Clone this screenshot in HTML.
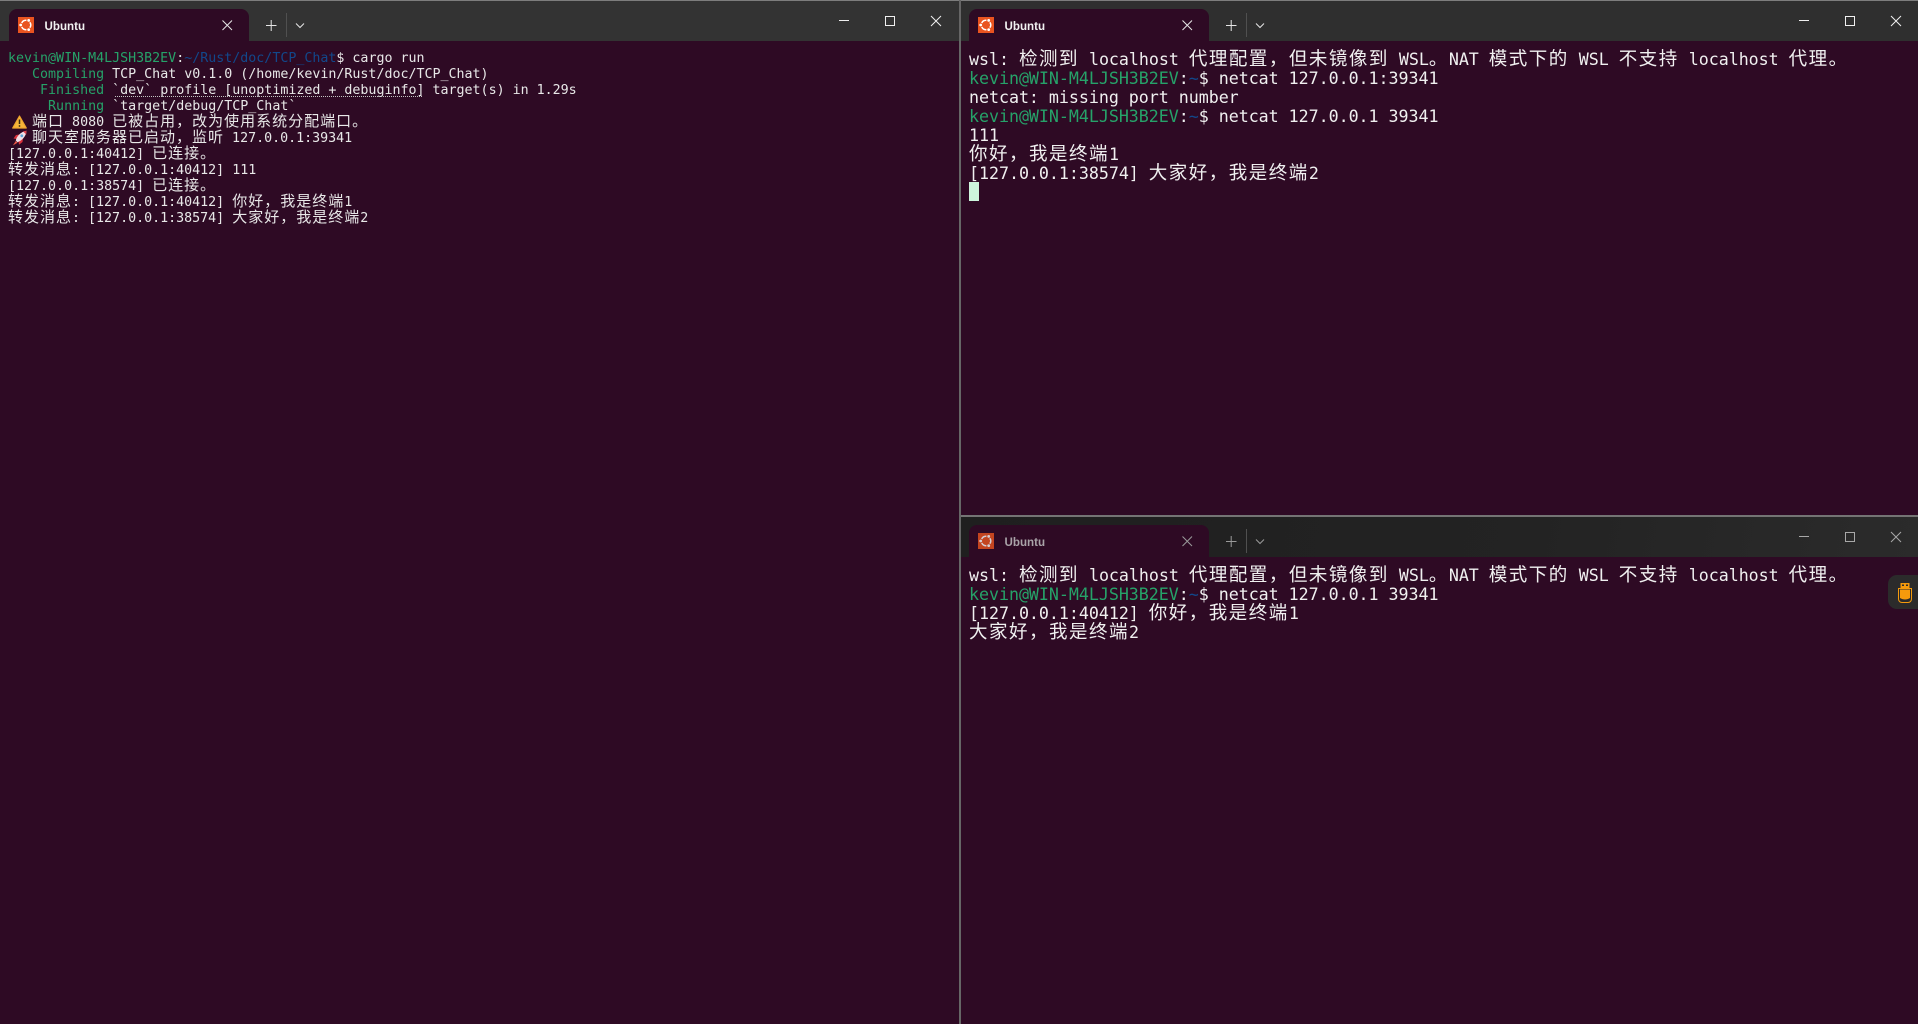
<!DOCTYPE html>
<html lang="zh"><head><meta charset="utf-8"><title>Ubuntu</title>
<style>
html,body{margin:0;padding:0;width:1918px;height:1024px;overflow:hidden;background:#2e0a24}
.a{position:absolute}
.bar{position:absolute;height:41px}
.tab{position:absolute;top:9px;width:240px;height:32px;background:#2e0a24;border-radius:8px 8px 0 0}
.name{position:absolute;top:20px;font:bold 11.6px/14px "Liberation Sans",sans-serif;color:#f2f2f2}
.term{position:absolute;font-family:"DejaVu Sans Mono",monospace;color:#f0f0f0;white-space:pre}
.term div{position:absolute;left:0;white-space:pre}
.s{font-size:13.33px;line-height:16px;letter-spacing:-.015px;color:#e8e8e8}
.b{font-size:16.67px;line-height:19px;letter-spacing:-.04px}
.s i,.b i{font-style:normal;line-height:0;font-family:"Noto Sans CJK SC","WenQuanYi Zen Hei",sans-serif}
.s i{font-size:15px;letter-spacing:1px}
.b i{font-size:18.5px;letter-spacing:1.5px}
.g{color:#26a269}.u{color:#12488b}
svg{position:absolute;overflow:visible}
</style></head><body>

<!-- title bars -->
<div class="bar" style="left:0;top:1px;width:959px;height:40px;background:#333333"></div>
<div class="bar" style="left:961px;top:1px;width:957px;height:40px;background:#2f2f2f"></div>
<div class="bar" style="left:961px;top:517px;width:957px;height:40px;background:linear-gradient(100deg,#1f1f1f,#232323 60%,#2b2b2b)"></div>
<div class="a" style="left:0;top:0;width:1918px;height:1px;background:#7d7d7d"></div>
<div class="a" style="left:959px;top:0;width:2px;height:1024px;background:#666666"></div>
<div class="a" style="left:961px;top:515px;width:957px;height:2px;background:#747474"></div>

<!-- tabs -->
<div class="tab" style="left:9px"></div>
<div class="tab" style="left:969px"></div>
<div class="tab" style="left:969px;top:525px"></div>

<svg width="0" height="0" style="left:0;top:0">
<defs>
<g id="logo">
<rect width="16" height="16" fill="#e95420"/>
<path d="M3.740 6.010A4.700 4.700 0 0 1 8.410 3.320M11.850 5.300A4.700 4.700 0 0 1 11.850 10.700M8.410 12.680A4.700 4.700 0 0 1 3.740 9.990" fill="none" stroke="#fff" stroke-width="1.500"/>
<circle cx="2.700" cy="8" r="1.400" fill="#fff"/><circle cx="10.700" cy="3.400" r="1.400" fill="#fff"/><circle cx="10.700" cy="12.600" r="1.400" fill="#fff"/>
</g>
<g id="ctl" fill="none" stroke-width="1">
<path d="M222.500 20.500L232 30M232 20.500L222.500 30"/>
<path d="M266 25.500H276.500M271.200 20V31"/>
<path d="M286.500 13V37" stroke="#505050"/>
<path d="M296 23.500L300 27.500L304 23.500"/>
</g>
<g id="win" fill="none" stroke-width="1">
<path d="M0 20.500H10"/>
<rect x="46.500" y="16.500" width="9" height="9"/>
<path d="M92 16L102 26M102 16L92 26"/>
</g>
</defs>
</svg>

<!-- left bar icons -->
<svg style="left:18px;top:17px" width="16" height="16"><use href="#logo"/></svg>
<div class="name" style="left:44.500px">Ubuntu</div>
<svg style="left:0;top:0" width="320" height="41" stroke="#e6e6e6"><use href="#ctl"/></svg>
<svg style="left:839px;top:0" width="110" height="41" stroke="#f0f0f0"><use href="#win"/></svg>

<!-- right top bar icons -->
<svg style="left:978px;top:17px" width="16" height="16"><use href="#logo"/></svg>
<div class="name" style="left:1004.500px">Ubuntu</div>
<svg style="left:960px;top:0" width="320" height="41" stroke="#e6e6e6"><use href="#ctl"/></svg>
<svg style="left:1799px;top:0" width="110" height="41" stroke="#f0f0f0"><use href="#win"/></svg>

<!-- right bottom bar icons -->
<svg style="left:978px;top:533px;opacity:.8" width="16" height="16"><use href="#logo"/></svg>
<div class="name" style="left:1004.500px;top:536px;color:#a9a3a8">Ubuntu</div>
<svg style="left:960px;top:516px" width="320" height="41" stroke="#9a9a9a"><use href="#ctl"/></svg>
<svg style="left:1799px;top:516px" width="110" height="41" stroke="#a8a8a8"><use href="#win"/></svg>

<!-- left terminal -->
<div class="term s" style="left:8px;top:51px">
<div style="top:0"><span class="g">kevin@WIN-M4LJSH3B2EV</span>:<span class="u">~/Rust/doc/TCP_Chat</span>$ cargo run</div>
<div style="top:16px"><span class="g">   Compiling</span> TCP_Chat v0.1.0 (/home/kevin/Rust/doc/TCP_Chat)</div>
<div style="top:32px"><span class="g">    Finished</span> `dev` profile [unoptimized + debuginfo] target(s) in 1.29s</div>
<div style="top:48px"><span class="g">     Running</span> `target/debug/TCP_Chat`</div>
<div style="top:64px">   <i>端口</i> 8080 <i>已被占用，改为使用系统分配端口。</i></div>
<div style="top:80px">   <i>聊天室服务器已启动，监听</i> 127.0.0.1:39341</div>
<div style="top:96px">[127.0.0.1:40412] <i>已连接。</i></div>
<div style="top:112px"><i>转发消息</i>: [127.0.0.1:40412] 111</div>
<div style="top:128px">[127.0.0.1:38574] <i>已连接。</i></div>
<div style="top:144px"><i>转发消息</i>: [127.0.0.1:40412] <i>你好，我是终端</i>1</div>
<div style="top:160px"><i>转发消息</i>: [127.0.0.1:38574] <i>大家好，我是终端</i>2</div>
</div>
<div class="a" style="left:115px;top:96px;width:308px;height:1px;background:repeating-linear-gradient(90deg,#c4c4c4 0 1px,transparent 1px 2px)"></div>

<!-- warning emoji -->
<svg style="left:12px;top:115px" width="15" height="14" viewBox="0 0 15 14">
<path d="M7.500 1L14.300 13H.700Z" fill="#f5b53a" stroke="#f0a52d" stroke-linejoin="round" stroke-width="1.200"/>
<path d="M7.500 4.500V9" stroke="#3a2a10" stroke-width="1.500"/><circle cx="7.500" cy="11" r=".9" fill="#3a2a10"/>
</svg>
<!-- rocket emoji -->
<svg style="left:12px;top:130px" width="15" height="16" viewBox="0 0 15 16">
<path d="M4.500 9L1.500 8.500L4 5L7.500 4.500ZM6.500 11.500L7 14.800L10.500 12L11 8.500Z" fill="#d8323c"/>
<path d="M3.800 10.500C4.500 6.500 9 1.500 14.500 .8C14.300 6.500 9.500 11 5.500 12.200Z" fill="#f0dfe6"/>
<path d="M11 1.400L14.500 .8L14.200 4.500Z" fill="#e0404a"/>
<circle cx="9.800" cy="5.800" r="1.400" fill="#5ba7d8"/>
<path d="M3.800 11L.8 15.500L5.500 12.700Z" fill="#ef5a48"/>
</svg>

<!-- right top terminal -->
<div class="term b" style="left:969px;top:50px">
<div style="top:0">wsl: <i>检测到</i> localhost <i>代理配置，但未镜像到</i> WSL<i>。</i>NAT <i>模式下的</i> WSL <i>不支持</i> localhost <i>代理。</i></div>
<div style="top:19px"><span class="g">kevin@WIN-M4LJSH3B2EV</span>:<span class="u">~</span>$ netcat 127.0.0.1:39341</div>
<div style="top:38px">netcat: missing port number</div>
<div style="top:57px"><span class="g">kevin@WIN-M4LJSH3B2EV</span>:<span class="u">~</span>$ netcat 127.0.0.1 39341</div>
<div style="top:76px">111</div>
<div style="top:95px"><i>你好，我是终端</i>1</div>
<div style="top:114px">[127.0.0.1:38574] <i>大家好，我是终端</i>2</div>
</div>
<div class="a" style="left:969px;top:182px;width:10px;height:19px;background:#cdf5dc"></div>

<!-- right bottom terminal -->
<div class="term b" style="left:969px;top:566px">
<div style="top:0">wsl: <i>检测到</i> localhost <i>代理配置，但未镜像到</i> WSL<i>。</i>NAT <i>模式下的</i> WSL <i>不支持</i> localhost <i>代理。</i></div>
<div style="top:19px"><span class="g">kevin@WIN-M4LJSH3B2EV</span>:<span class="u">~</span>$ netcat 127.0.0.1 39341</div>
<div style="top:38px">[127.0.0.1:40412] <i>你好，我是终端</i>1</div>
<div style="top:57px"><i>大家好，我是终端</i>2</div>
</div>

<!-- floating widget -->
<div class="a" style="left:1888px;top:575px;width:30px;height:34px;background:#2b2b2b;border-radius:9px 0 0 9px"></div>
<svg style="left:1897px;top:582px" width="16" height="22" viewBox="0 0 16 22">
<rect x="3.500" y="1" width="9" height="5" fill="#f59a0c"/>
<rect x="5" y="2.500" width="2" height="1.500" fill="#2b2b2b"/><rect x="9" y="2.500" width="2" height="1.500" fill="#2b2b2b"/>
<path d="M1.500 6.500H14.500V17C14.500 19 13 20.500 11 20.500H5C3 20.500 1.500 19 1.500 17Z" fill="none" stroke="#f59a0c"/>
<path d="M3 7.500H13V16C10 18 6 18 3 16Z" fill="#f59a0c"/>
</svg>
</body></html>
